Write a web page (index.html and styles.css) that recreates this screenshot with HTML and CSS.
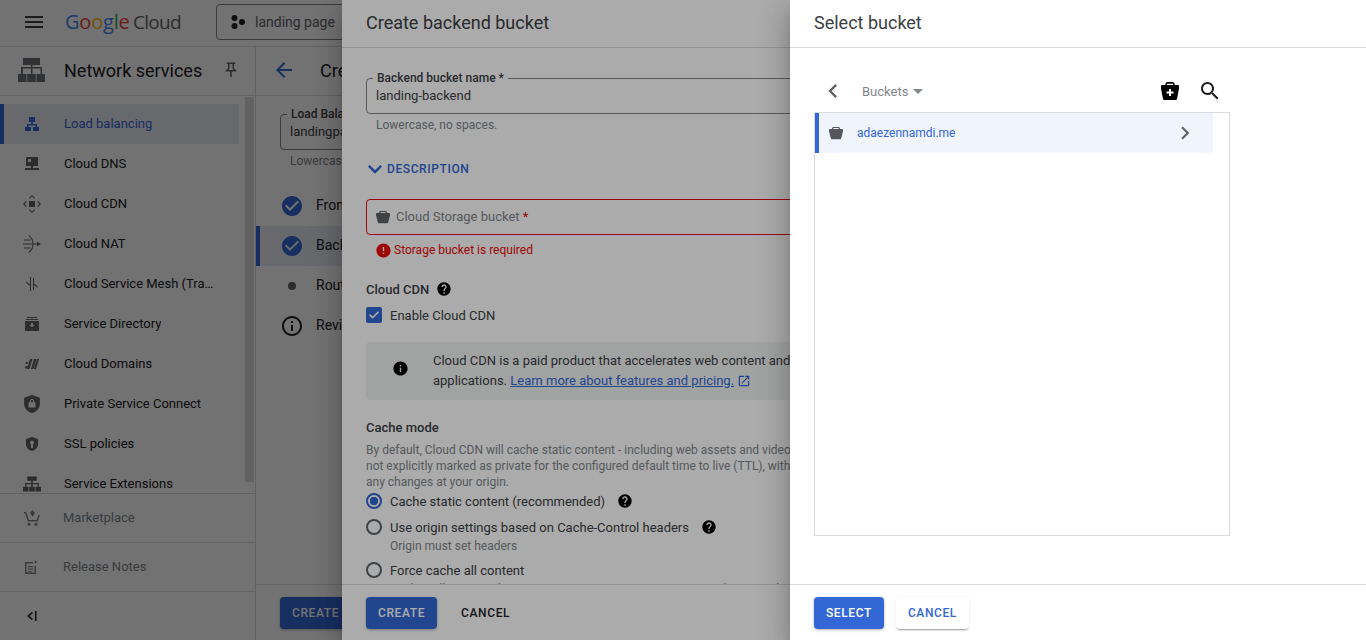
FILE: index.html
```html
<!DOCTYPE html>
<html lang="en">
<head>
    <meta charset="UTF-8">
    <meta name="viewport" content="width=device-width, initial-scale=1.0">
    <title>Select bucket</title>
    <link rel="stylesheet" href="styles.css">
</head>
<body>
    <svg class="sprite" width="0" height="0">
        <symbol id="i-menu" viewBox="0 0 24 24"><path d="M3 18h18v-2H3v2zm0-5h18v-2H3v2zm0-7v2h18V6H3z"/></symbol>
        <symbol id="i-back" viewBox="0 0 24 24"><path d="M20 11H7.830l5.590-5.590L12 4l-8 8 8 8 1.410-1.410L7.830 13H20v-2z"/></symbol>
        <symbol id="i-check" viewBox="0 0 24 24"><path d="M12 2C6.480 2 2 6.480 2 12s4.480 10 10 10 10-4.480 10-10S17.520 2 12 2zm-2 15l-5-5 1.410-1.410L10 14.170l7.590-7.590L19 8l-9 9z"/></symbol>
        <symbol id="i-info-o" viewBox="0 0 24 24"><path d="M11 7h2v2h-2zm0 4h2v6h-2zm1-9C6.480 2 2 6.480 2 12s4.480 10 10 10 10-4.480 10-10S17.520 2 12 2zm0 18c-4.410 0-8-3.590-8-8s3.590-8 8-8 8 3.590 8 8-3.590 8-8 8z"/></symbol>
        <symbol id="i-info" viewBox="0 0 24 24"><path d="M12 2C6.480 2 2 6.480 2 12s4.480 10 10 10 10-4.480 10-10S17.520 2 12 2zm1 15h-2v-6h2v6zm0-8h-2V7h2v2z"/></symbol>
        <symbol id="i-help" viewBox="0 0 24 24"><path d="M12 2C6.480 2 2 6.480 2 12s4.480 10 10 10 10-4.480 10-10S17.520 2 12 2zm1 17h-2v-2h2v2zm2.070-7.750l-.9.920C13.450 12.900 13 13.500 13 15h-2v-.5c0-1.100.45-2.100 1.170-2.830l1.240-1.260c.37-.36.59-.86.59-1.410 0-1.100-.9-2-2-2s-2 .9-2 2H8c0-2.210 1.790-4 4-4s4 1.790 4 4c0 .88-.36 1.680-.93 2.250z"/></symbol>
        <symbol id="i-error" viewBox="0 0 24 24"><path d="M12 2C6.480 2 2 6.480 2 12s4.480 10 10 10 10-4.480 10-10S17.520 2 12 2zm1 15h-2v-2h2v2zm0-4h-2V7h2v6z"/></symbol>
        <symbol id="i-left" viewBox="0 0 24 24"><path d="M15.410 7.410L14 6l-6 6 6 6 1.410-1.410L10.830 12z"/></symbol>
        <symbol id="i-right" viewBox="0 0 24 24"><path d="M10 6L8.590 7.410 13.170 12l-4.580 4.590L10 18l6-6z"/></symbol>
        <symbol id="i-more" viewBox="0 0 24 24"><path d="M16.590 8.590L12 13.170 7.410 8.590 6 10l6 6 6-6z"/></symbol>
        <symbol id="i-search" viewBox="0 0 24 24"><path d="M15.500 14h-.79l-.28-.27C15.410 12.590 16 11.110 16 9.500 16 5.910 13.090 3 9.500 3S3 5.910 3 9.500 5.910 16 9.500 16c1.610 0 3.090-.59 4.230-1.570l.27.28v.79l5 4.990L20.490 19l-4.990-5zm-6 0C7.010 14 5 11.990 5 9.500S7.010 5 9.500 5 14 7.010 14 9.500 11.990 14 9.500 14z"/></symbol>
        <symbol id="i-open" viewBox="0 0 24 24"><path d="M19 19H5V5h7V3H5c-1.110 0-2 .9-2 2v14c0 1.100.89 2 2 2h14c1.100 0 2-.9 2-2v-7h-2v7zM14 3v2h3.590l-9.830 9.830 1.410 1.410L19 6.410V10h2V3h-7z"/></symbol>
        <symbol id="i-pin" viewBox="0 0 24 24"><path d="M14 4v5c0 1.120.37 2.160 1 3H9c.65-.86 1-1.900 1-3V4h4m3-2H7c-.55 0-1 .45-1 1s.45 1 1 1h1v5c0 1.660-1.340 3-3 3v2h5.970v7l1 1 1-1v-7H19v-2c-1.660 0-3-1.340-3-3V4h1c.55 0 1-.45 1-1s-.45-1-1-1z"/></symbol>
        <symbol id="i-bucket" viewBox="0 0 16 16"><path d="M5 1h6q1.500 0 1.700 2.500H15q1 0 1 1V6l-2 8q-.2 1-1.500 1h-9Q2.200 15 2 14L0 6V4.500q0-1 1-1h2.300Q3.500 1 5 1zM5.200 2.300 4.900 3.500h6.200l-.3-1.200z" fill-rule="evenodd"/></symbol>
        <symbol id="i-bucket-add" viewBox="0 0 18 18"><path d="M6 0h6q1.500 0 1.800 3H17q1 0 1 1v2.500L16 17q-.2 1-1.500 1h-11Q2.200 18 2 17L0 6.500V4q0-1 1-1h3.200Q4.500 0 6 0zM6 1.700 5.800 3h6.400L12 1.700zM8 7v2.500H5.500v2H8V14h2v-2.500h2.500v-2H10V7z" fill-rule="evenodd"/></symbol>
        <symbol id="i-hub" viewBox="0 0 14 14"><path d="M4 0h6v5H7.700v2H12v3h2v4H8v-4h2.500V8.400h-7V10H6v4H0v-4h2V7h4.300V5H4z"/></symbol>
        <symbol id="i-hub3" viewBox="0 0 17 14"><path d="M4 0h9v4H9.200v2H15v3.500h-1.200V7.200H9.200v2.300H7.800V7.200H3.200v2.300H2V6h5.800V4H4z"/><path d="M0 9.500h5.200V14H0zM5.900 9.500h5.200V14H5.900zM11.800 9.500H17V14h-5.200z"/></symbol>
        <symbol id="i-net" viewBox="0 0 27 24"><path d="M5 0h17v7h-7.500v2H24v7h-1.500v-5.500h-8V16H13v-5.500H5V16H3V9h10V7H5z"/><path d="M0 16h8.500v8H0zM9.250 16h8.500v8h-8.500zM18.500 16H27v8h-8.500z"/></symbol>
        <symbol id="i-dns" viewBox="0 0 14 14"><path d="M1 0h12v9H8v2h6v2H0v-2h6V9H1zm2 2v3h3V2z" fill-rule="evenodd"/></symbol>
        <symbol id="i-cdn" viewBox="0 0 18 18"><path d="M6 6h6v6H6zM9 0l3 3-.8.8L9 1.600 6.800 3.800 6 3zM9 18l-3-3 .8-.8L9 16.400l2.200-2.200.8.8zM0 9l3-3 .8.8L1.600 9l2.200 2.200L3 12zM18 9l-3 3-.8-.8L16.400 9l-2.200-2.200L15 6z"/></symbol>
        <symbol id="i-nat" viewBox="0 0 18 18"><path d="M6 0c3 2 4.500 5 4.500 9S9 16 6 18l-.6-.8C8 15.300 9.500 12.500 9.500 9S8 2.700 5.400 .8zM0 8.500h14V6.800L18 9l-4 2.200V9.500H0zM1 4.500h6.500v1H1zM1 12.500h6.500v1H1z"/></symbol>
        <symbol id="i-mesh" viewBox="0 0 14 14"><path d="M5 0h1v14H5V8.500H4L1 5.500l.7-.7L4 7.100H5zM8 1h1v6h1l3 3-.7.700L10 8.500H9V13H8z"/></symbol>
        <symbol id="i-dir" viewBox="0 0 14 14"><path d="M2 0h10v1H2zM1 2h12v1H1zM0 4h14v10H0zM6 6v2H4l3 2 3-2H8V6z" fill-rule="evenodd"/></symbol>
        <symbol id="i-domains" viewBox="0 0 14 14"><path d="M5 2h2.500l-3 10H2zM9 2h2.500l-3 10H6zM12 2h2l-3 10H9zM1 5h2l-.5 2H.5zM.5 9h2L2 11.500H0z"/></symbol>
        <symbol id="i-shield" viewBox="0 0 14 16"><path d="M7 0l7 2.500v5C14 11.500 11 15 7 16 3 15 0 11.500 0 7.500v-5zM5 6.500H4V11h6V6.500H9V5.500a2 2 0 0 0-4 0zM6 5.500a1 1 0 0 1 2 0v1H6z" fill-rule="evenodd"/></symbol>
        <symbol id="i-ssl" viewBox="0 0 12 14"><path d="M6 0l6 2v5c0 3.500-2.500 6-6 7-3.500-1-6-3.500-6-7V2zM6 3.500a2 2 0 0 0-1 3.700V11h2V7.200a2 2 0 0 0-1-3.700z" fill-rule="evenodd"/></symbol>
        <symbol id="i-cart" viewBox="0 0 16 16"><path d="M0 2h2.300l2.500 8h7.800L14.400 5h1.500l-2.300 6.500H3.700L1.300 3.500H0z"/><path d="M8.500 0 11 3 8.500 6.800 6 3z"/><circle cx="5" cy="14.300" r="1.500"/><circle cx="12" cy="14.300" r="1.500"/></symbol>
        <symbol id="i-notes" viewBox="0 0 14 14"><path d="M1 2h8v1.500H2.500v9h8V6H12v8H1zM4 6h5v1.300H4zM4 8.500h5v1.300H4zM4 11h3.500v1H4zM11.500 0l.6 1.400 1.400.6-1.400.6-.6 1.400-.6-1.400L9.500 2l1.400-.6z"/></symbol>
        <symbol id="i-collapse" viewBox="0 0 12 12"><path d="M10 1h1.500v10H10zM6.800 2 8 3 4.500 6 8 9 6.800 10 2 6z"/></symbol>
        <symbol id="i-project" viewBox="0 0 14 14"><circle cx="3.500" cy="3" r="3"/><circle cx="11" cy="7" r="3"/><circle cx="3.500" cy="11" r="3"/></symbol>
    </svg>

    <div class="app">
        <header class="topbar">
            <svg class="icon topbar-menu"><use href="#i-menu"/></svg>
            <div class="logo">
                <span class="logo-google"><span class="g-blue">G</span><span class="g-red">o</span><span class="g-yellow">o</span><span class="g-blue">g</span><span class="g-green">l</span><span class="g-red">e</span></span>
                <span class="logo-cloud">Cloud</span>
            </div>
            <div class="project">
                <svg class="project-icon"><use href="#i-project"/></svg>
                <span>landing page</span>
            </div>
        </header>
        <div class="columns">
            <aside class="sidebar">
                <div class="sidebar-head">
                    <svg class="net-icon"><use href="#i-net"/></svg>
                    <h2>Network services</h2>
                    <svg class="pin"><use href="#i-pin"/></svg>
                </div>
                <div class="nav-wrap">
                    <nav class="nav">
                        <a class="nav-item active"><svg class="nav-icon"><use href="#i-hub"/></svg><span>Load balancing</span></a>
                        <a class="nav-item"><svg class="nav-icon"><use href="#i-dns"/></svg><span>Cloud DNS</span></a>
                        <a class="nav-item"><svg class="nav-icon big"><use href="#i-cdn"/></svg><span>Cloud CDN</span></a>
                        <a class="nav-item"><svg class="nav-icon big"><use href="#i-nat"/></svg><span>Cloud NAT</span></a>
                        <a class="nav-item"><svg class="nav-icon"><use href="#i-mesh"/></svg><span>Cloud Service Mesh (Traffic Director)</span></a>
                        <a class="nav-item"><svg class="nav-icon"><use href="#i-dir"/></svg><span>Service Directory</span></a>
                        <a class="nav-item"><svg class="nav-icon"><use href="#i-domains"/></svg><span>Cloud Domains</span></a>
                        <a class="nav-item"><svg class="nav-icon tall"><use href="#i-shield"/></svg><span>Private Service Connect</span></a>
                        <a class="nav-item"><svg class="nav-icon"><use href="#i-ssl"/></svg><span>SSL policies</span></a>
                        <a class="nav-item"><svg class="nav-icon big"><use href="#i-hub3"/></svg><span>Service Extensions</span></a>
                    </nav>
                    <div class="scrollbar"></div>
                </div>
                <a class="side-link"><svg class="side-icon"><use href="#i-cart"/></svg><span>Marketplace</span></a>
                <a class="side-link"><svg class="side-icon small"><use href="#i-notes"/></svg><span>Release Notes</span></a>
                <div class="side-collapse"><svg class="collapse-icon"><use href="#i-collapse"/></svg></div>
            </aside>
            <main class="main">
                <div class="main-head">
                    <svg class="icon back"><use href="#i-back"/></svg>
                    <h1>Create load balancer</h1>
                </div>
                <div class="main-body">
                    <div class="field lb-field">
                        <label>Load Balancer name</label>
                        <div class="field-value">landingpage</div>
                    </div>
                    <p class="hint">Lowercase, no spaces.</p>
                    <ul class="steps">
                        <li><svg class="icon step-icon"><use href="#i-check"/></svg><span>Frontend configuration</span></li>
                        <li class="current"><svg class="icon step-icon"><use href="#i-check"/></svg><span>Backend configuration</span></li>
                        <li><i class="step-dot"></i><span>Routing rules</span></li>
                        <li><svg class="icon step-icon dark"><use href="#i-info-o"/></svg><span>Review and finalize</span></li>
                    </ul>
                </div>
                <div class="actions main-actions">
                    <button class="btn primary">CREATE</button>
                </div>
            </main>
        </div>
    </div>

    <div class="scrim"></div>

    <section class="drawer backend">
        <div class="drawer-head">Create backend bucket</div>
        <div class="drawer-body">
            <div class="field">
                <label>Backend bucket name *</label>
                <div class="field-value">landing-backend</div>
            </div>
            <p class="hint">Lowercase, no spaces.</p>
            <div class="toggle"><svg class="toggle-icon"><use href="#i-more"/></svg>DESCRIPTION</div>
            <div class="bucket-input">
                <svg class="bucket-icon"><use href="#i-bucket"/></svg>
                <span>Cloud Storage bucket <em>*</em></span>
            </div>
            <div class="error"><svg class="error-icon"><use href="#i-error"/></svg>Storage bucket is required</div>
            <h3 class="section-title cdn-title">Cloud CDN <svg class="help"><use href="#i-help"/></svg></h3>
            <div class="check">
                <span class="checkbox"><svg viewBox="0 0 16 16"><path d="M3 8.200l1.100-1.100 2.500 2.500 5.300-5.300L13 5.400l-6.400 6.400z"/></svg></span>
                Enable Cloud CDN
            </div>
            <div class="notice">
                <svg class="notice-icon"><use href="#i-info"/></svg>
                <p>Cloud CDN is a paid product that accelerates web content and reduces latency for your<br>applications. <a class="link">Learn more about features and pricing.</a> <svg class="open-icon"><use href="#i-open"/></svg></p>
            </div>
            <h3 class="section-title cache-title">Cache mode</h3>
            <p class="cache-text">By default, Cloud CDN will cache static content - including web assets and videos - that is<br>not explicitly marked as private for the configured default time to live (TTL), without requiring<br>any changes at your origin.</p>
            <div class="radios">
                <div class="radio-row selected"><span class="radio"></span>Cache static content (recommended) <svg class="help"><use href="#i-help"/></svg></div>
                <div class="radio-row"><span class="radio"></span>Use origin settings based on Cache-Control headers <svg class="help"><use href="#i-help"/></svg></div>
                <p class="radio-sub">Origin must set headers</p>
                <div class="radio-row force"><span class="radio"></span>Force cache all content</div>
                <p class="radio-sub">Caches all static and non-static responses, ignoring private and no-store headers</p>
            </div>
        </div>
        <div class="actions">
            <button class="btn primary">CREATE</button>
            <button class="btn flat">CANCEL</button>
        </div>
    </section>

    <div class="scrim"></div>

    <section class="drawer select">
        <div class="drawer-head">Select bucket</div>
        <div class="drawer-body picker">
            <div class="picker-bar">
                <svg class="picker-back"><use href="#i-left"/></svg>
                <span class="crumb">Buckets</span>
                <span class="caret"></span>
                <svg class="picker-add"><use href="#i-bucket-add"/></svg>
                <svg class="picker-search"><use href="#i-search"/></svg>
            </div>
            <div class="picker-list">
                <div class="bucket-row">
                    <svg class="row-icon"><use href="#i-bucket"/></svg>
                    <span>adaezennamdi.me</span>
                    <svg class="row-arrow"><use href="#i-right"/></svg>
                </div>
            </div>
        </div>
        <div class="actions picker-actions">
            <button class="btn solid">SELECT</button>
            <button class="btn raised">CANCEL</button>
        </div>
    </section>
</body>
</html>
```

FILE: styles.css
```css
* {
    box-sizing: border-box;
}

html, body {
    height: 100%;
}

body {
    margin: 0;
    overflow: hidden;
    position: relative;
    background: #fff;
    color: #3c4043;
    font-family: Roboto, Arial, sans-serif;
    font-size: 13px;
}

h1, h2, h3, p, ul {
    margin: 0;
    padding: 0;
    font-weight: 400;
}

svg {
    fill: currentColor;
    flex: none;
}

.sprite {
    position: absolute;
}

.icon {
    width: 24px;
    height: 24px;
}

.app {
    height: 640px;
    display: flex;
    flex-direction: column;
}

/* top bar */
.topbar {
    height: 47px;
    flex: none;
    display: flex;
    align-items: center;
    padding: 0 0 2px 22px;
    border-bottom: 1px solid #dadce0;
}

.topbar-menu {
    color: #3c4043;
}

.logo {
    margin: -2px 0 0 19px;
    width: 151px;
    font-family: "Open Sans", Arial, sans-serif;
    white-space: nowrap;
}

.logo-google {
    font-size: 20px;
    letter-spacing: -0.2px;
}

.g-blue { color: #4285f4; }
.g-red { color: #ea4335; }
.g-yellow { color: #fbbc04; }
.g-green { color: #34a853; }

.logo-cloud {
    color: #5f6368;
    font-size: 19px;
    letter-spacing: -0.7px;
}

.project {
    width: 200px;
    height: 36px;
    display: flex;
    align-items: center;
    gap: 10px;
    padding-left: 14px;
    border: 1px solid #80868b;
    border-radius: 4px;
    font-size: 14px;
    color: #5f6368;
}

.project-icon {
    width: 14px;
    height: 14px;
    color: #202124;
}

.columns {
    flex: 1;
    min-height: 0;
    display: flex;
}

/* left nav */
.sidebar {
    width: 256px;
    flex: none;
    display: flex;
    flex-direction: column;
    border-right: 1px solid #dadce0;
}

.sidebar-head {
    height: 49px;
    flex: none;
    display: flex;
    align-items: center;
    padding: 0 0 2px 18px;
    border-bottom: 1px solid #dadce0;
    color: #202124;
}

.sidebar-head h2 {
    margin-left: 19px;
    font-size: 18px;
    width: 150px;
    white-space: nowrap;
}

.net-icon {
    width: 27px;
    height: 24px;
    color: #6b6f73;
}

.pin {
    width: 18px;
    height: 18px;
    margin-left: 8px;
    color: #5f6368;
}

.nav-wrap {
    flex: 1;
    min-height: 0;
    overflow: hidden;
    position: relative;
}

.nav {
    width: 239px;
    padding-top: 8px;
}

.nav-item {
    height: 40px;
    display: flex;
    align-items: center;
    position: relative;
    padding-left: 25px;
    color: #202124;
}

.nav-item span {
    margin-left: 25px;
    padding-bottom: 2px;
    max-width: 150px;
    white-space: nowrap;
    overflow: hidden;
    text-overflow: ellipsis;
}

.nav-item.active {
    background: #e8eaf3;
    color: #3367d6;
    border-left: 4px solid #3367d6;
    padding-left: 21px;
}

.nav-icon {
    width: 14px;
    height: 14px;
    color: #5f6368;
}

.active .nav-icon {
    color: #3367d6;
}

.nav-icon.big {
    width: 18px;
    height: 18px;
    margin: 0 -2px;
}

.nav-icon.tall {
    width: 16px;
    height: 18px;
    margin: 0 -1px;
}

.scrollbar {
    position: absolute;
    top: 1px;
    left: 245px;
    width: 9px;
    height: 385px;
    background: #dadada;
}

.side-link {
    height: 49px;
    flex: none;
    display: flex;
    align-items: center;
    padding-left: 24px;
    border-top: 1px solid #dadce0;
    color: #80868b;
}

.side-link span {
    margin-left: 23px;
    padding-bottom: 2px;
}

.side-icon {
    width: 16px;
    height: 16px;
}

.side-icon.small {
    width: 14px;
    height: 14px;
    margin-right: 2px;
}

.side-collapse {
    height: 49px;
    flex: none;
    display: flex;
    align-items: center;
    padding-left: 25px;
    border-top: 1px solid #dadce0;
    color: #202124;
}

.collapse-icon {
    width: 12px;
    height: 12px;
}

/* page under the drawers */
.main {
    flex: 1;
    min-width: 0;
    display: flex;
    flex-direction: column;
}

.main-head {
    height: 49px;
    flex: none;
    display: flex;
    align-items: center;
    padding: 0 0 2px 16px;
    border-bottom: 1px solid #dadce0;
    color: #202124;
}

.main-head h1 {
    margin-left: 24px;
    font-size: 18px;
}

.back {
    color: #3367d6;
}

.main-body {
    flex: 1;
    padding-top: 18px;
}

.lb-field {
    margin-left: 24px;
}

.main-body .hint {
    margin-left: 34px;
}

.steps {
    list-style: none;
    margin-top: 18px;
    color: #202124;
}

.steps li {
    height: 40px;
    display: flex;
    align-items: center;
    gap: 12px;
    padding-left: 24px;
    font-size: 14px;
}

.steps li span {
    padding-bottom: 2px;
}

.steps li.current {
    background: #e8eaf3;
    border-left: 4px solid #3367d6;
    padding-left: 20px;
}

.step-icon {
    color: #3367d6;
}

.step-icon.dark {
    color: #202124;
}

.step-dot {
    width: 8px;
    height: 8px;
    margin: 0 8px;
    border-radius: 50%;
    background: #5f6368;
}

.actions {
    height: 56px;
    flex: none;
    display: flex;
    align-items: center;
    gap: 11px;
    padding-left: 24px;
    border-top: 1px solid #dadce0;
}

.picker-actions {
    gap: 12px;
}

.main-actions {
    background: #fff;
}

.btn {
    height: 32px;
    padding: 0 12px;
    border: none;
    border-radius: 4px;
    font-family: inherit;
    font-size: 12px;
    font-weight: 500;
    letter-spacing: 0.6px;
}

.btn.primary, .btn.solid {
    background: #3367d6;
    color: #fff;
    box-shadow: 0 1px 3px rgba(0, 0, 0, 0.3);
}

.btn.flat {
    margin-left: 1px;
    background: none;
    color: #202124;
}

.btn.raised {
    background: #fff;
    color: #3367d6;
    box-shadow: 0 2px 2px -1px rgba(0, 0, 0, 0.4), 0 0 2px rgba(0, 0, 0, 0.08);
}

/* overlays */
.scrim {
    position: absolute;
    inset: 0;
    background: rgba(0, 0, 0, 0.33);
}

.drawer {
    position: absolute;
    top: 0;
    right: 0;
    bottom: 0;
    display: flex;
    flex-direction: column;
    background: #fff;
    box-shadow: 0 8px 10px -5px rgba(0, 0, 0, 0.2), 0 16px 24px 2px rgba(0, 0, 0, 0.14), 0 6px 30px 5px rgba(0, 0, 0, 0.12);
}

.backend {
    width: 1024px;
}

.select {
    width: 576px;
}

.drawer-head {
    height: 48px;
    flex: none;
    display: flex;
    align-items: center;
    padding: 0 24px 2px;
    font-size: 18px;
    border-bottom: 1px solid #dadce0;
}

.drawer-body {
    flex: 1;
    min-height: 0;
    overflow: hidden;
    padding: 30px 24px 0;
}

/* form fields */
.field {
    width: 640px;
    height: 36px;
    position: relative;
    padding: 9px 9px 0;
    border: 1px solid #80868b;
    border-radius: 4px;
    font-size: 13px;
    line-height: 15px;
}

.lb-field {
    width: 400px;
}

.field label {
    position: absolute;
    top: -8px;
    left: 6px;
    padding: 0 4px;
    background: #fff;
    font-size: 12px;
    line-height: 14px;
    font-weight: 500;
    color: #3c4043;
}

.hint {
    margin: 4px 0 0 10px;
    font-size: 12px;
    color: #80868b;
}

.toggle {
    display: flex;
    align-items: center;
    height: 20px;
    margin-top: 27px;
    font-size: 12px;
    font-weight: 500;
    letter-spacing: 0.6px;
    color: #3367d6;
}

.toggle-icon {
    width: 28px;
    height: 28px;
    margin: 0 -2px 0 -5px;
}

.bucket-input {
    width: 640px;
    height: 36px;
    margin-top: 20px;
    display: flex;
    align-items: center;
    gap: 6px;
    padding-left: 9px;
    border: 1px solid #ee0808;
    border-radius: 4px;
    color: #80868b;
}

.bucket-input span {
    padding-bottom: 2px;
}

.bucket-input em {
    font-style: normal;
    color: #ee0808;
}

.bucket-icon {
    width: 14px;
    height: 14px;
    color: #5f6368;
}

.error {
    display: flex;
    align-items: center;
    gap: 2px;
    margin: 8px 0 0 10px;
    height: 14px;
    font-size: 12px;
    color: #ee0808;
}

.error-icon {
    width: 17px;
    height: 17px;
    margin-left: -1px;
}

.section-title {
    display: flex;
    align-items: center;
    gap: 7px;
    font-size: 13px;
    font-weight: 500;
    color: #3c4043;
}

.cdn-title {
    margin-top: 23px;
    height: 18px;
}

.help {
    width: 16px;
    height: 16px;
    color: #000;
}

.check {
    display: flex;
    align-items: center;
    gap: 8px;
    height: 16px;
    margin-top: 9px;
}

.checkbox {
    width: 16px;
    height: 16px;
    border-radius: 2px;
    background: #3367d6;
}

.checkbox svg {
    display: block;
    fill: #fff;
}

.notice {
    width: 640px;
    height: 58px;
    margin-top: 19px;
    display: flex;
    align-items: center;
    padding-left: 26px;
    border-radius: 4px;
    background: #f1f3f4;
}

.notice-icon {
    width: 17px;
    height: 17px;
    margin-top: -5px;
    color: #000;
}

.notice p {
    margin-left: 24px;
    line-height: 20px;
    white-space: nowrap;
}

.link {
    color: #3367d6;
    text-decoration: underline;
}

.open-icon {
    width: 14px;
    height: 14px;
    vertical-align: -3px;
    color: #3367d6;
}

.cache-title {
    margin-top: 19px;
    height: 16px;
}

.cache-text {
    margin-top: 7px;
    font-size: 12px;
    line-height: 16px;
    color: #80868b;
    white-space: nowrap;
}

.radio-row {
    display: flex;
    align-items: center;
    gap: 8px;
    height: 16px;
}

.radio-row .help {
    margin-left: 4px;
}

.radios {
    margin-top: 3px;
}

.radio-row + .radio-row {
    margin-top: 10px;
}

.radio {
    width: 16px;
    height: 16px;
    border: 2px solid #5f6368;
    border-radius: 50%;
}

.selected .radio {
    border-color: #3367d6;
    background: radial-gradient(circle, #3367d6 0 4px, transparent 4.5px);
}

.radio-sub {
    margin: 4px 0 0 24px;
    font-size: 12px;
    color: #80868b;
    white-space: nowrap;
}

.force {
    margin-top: 9px;
}

/* bucket picker */
.picker-bar {
    width: 416px;
    height: 34px;
    display: flex;
    align-items: center;
    padding-bottom: 8px;
}

.picker-back {
    width: 28px;
    height: 28px;
    margin-left: 5px;
    margin-right: -2px;
    color: #5f6368;
}

.crumb {
    margin-left: 17px;
    color: #80868b;
}

.caret {
    margin-left: 5px;
    border-left: 5px solid transparent;
    border-right: 5px solid transparent;
    border-top: 5px solid #80868b;
}

.picker-add {
    width: 18px;
    height: 18px;
    margin-left: 238px;
    color: #000;
}

.picker-search {
    width: 24px;
    height: 24px;
    margin-left: 19px;
    color: #202124;
}

.picker-list {
    width: 416px;
    height: 424px;
    border: 1px solid #dadce0;
}

.bucket-row {
    width: 398px;
    height: 40px;
    display: flex;
    align-items: center;
    padding-left: 10px;
    border-left: 4px solid #3367d6;
    background: #eff4fd;
    font-size: 12px;
    color: #3367d6;
}

.row-icon {
    width: 14px;
    height: 14px;
    color: #55565b;
}

.bucket-row span {
    flex: 1;
    margin-left: 14px;
}

.row-arrow {
    width: 26px;
    height: 26px;
    margin-right: 15px;
    color: #5f6368;
}
```
